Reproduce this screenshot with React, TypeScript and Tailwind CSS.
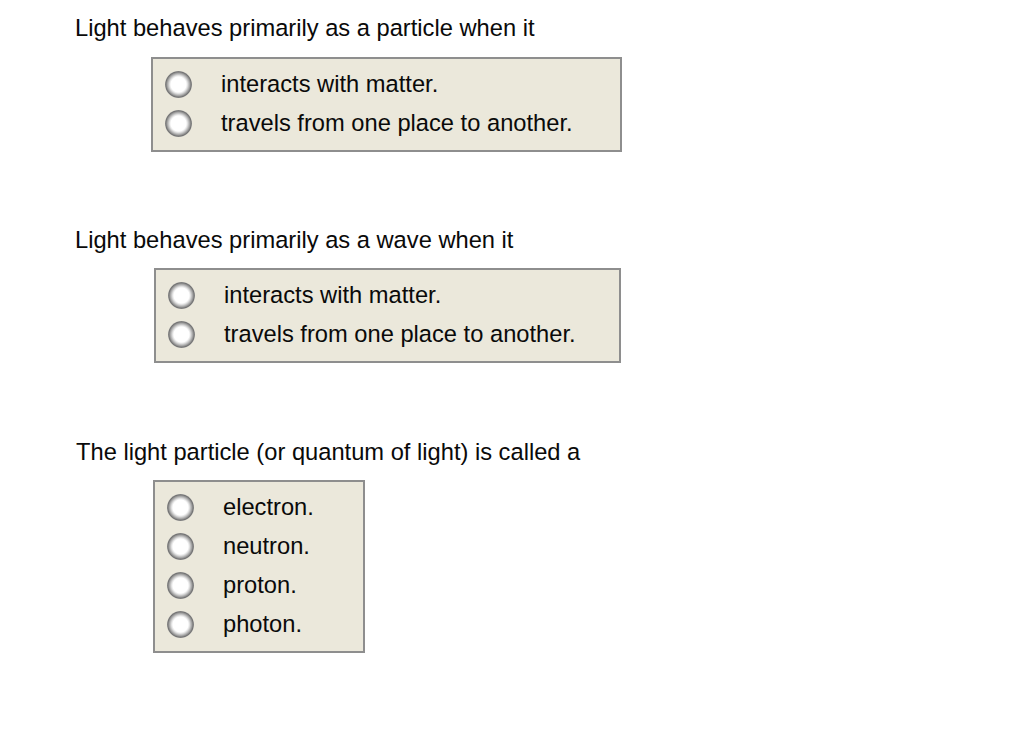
import React from "react";

function Radio() {
  return (
    <span className="block w-[27px] h-[27px] shrink-0 rounded-full bg-[radial-gradient(circle_closest-side,#ffffff_0%,#ffffff_56%,#e4e4e4_66%,#a8a8a8_82%,#737373_94%,#949494_100%)]" />
  );
}

function Options({ items, className }: { items: string[]; className: string }) {
  return (
    <div className={"border-2 border-[#8e8e8e] bg-[#ebe8db] pt-[5.5px] pb-[7.5px] pl-[12px] " + className}>
      {items.map((t) => (
        <div key={t} className="h-[39px] flex items-center gap-[29px]">
          <Radio />
          <span className="leading-[27px]">{t}</span>
        </div>
      ))}
    </div>
  );
}

export default function App() {
  return (
    <div
      className="w-[1024px] h-[756px] bg-white text-[23.7px] text-[#0a0a0a] overflow-hidden"
      style={{ fontFamily: '"Liberation Sans", Arial, sans-serif' }}
    >
      <div className="pt-[15px] pl-[75px] leading-[27px]">Light behaves primarily as a particle when it</div>
      <Options
        className="mt-[15px] ml-[151px] w-[471px]"
        items={["interacts with matter.", "travels from one place to another."]}
      />
      <div className="mt-[75px] pl-[75px] leading-[27px]">Light behaves primarily as a wave when it</div>
      <Options
        className="mt-[14px] ml-[154px] w-[467px]"
        items={["interacts with matter.", "travels from one place to another."]}
      />
      <div className="mt-[76px] pl-[76px] leading-[27px]">The light particle (or quantum of light) is called a</div>
      <Options
        className="mt-[14px] ml-[153px] w-[212px]"
        items={["electron.", "neutron.", "proton.", "photon."]}
      />
    </div>
  );
}
